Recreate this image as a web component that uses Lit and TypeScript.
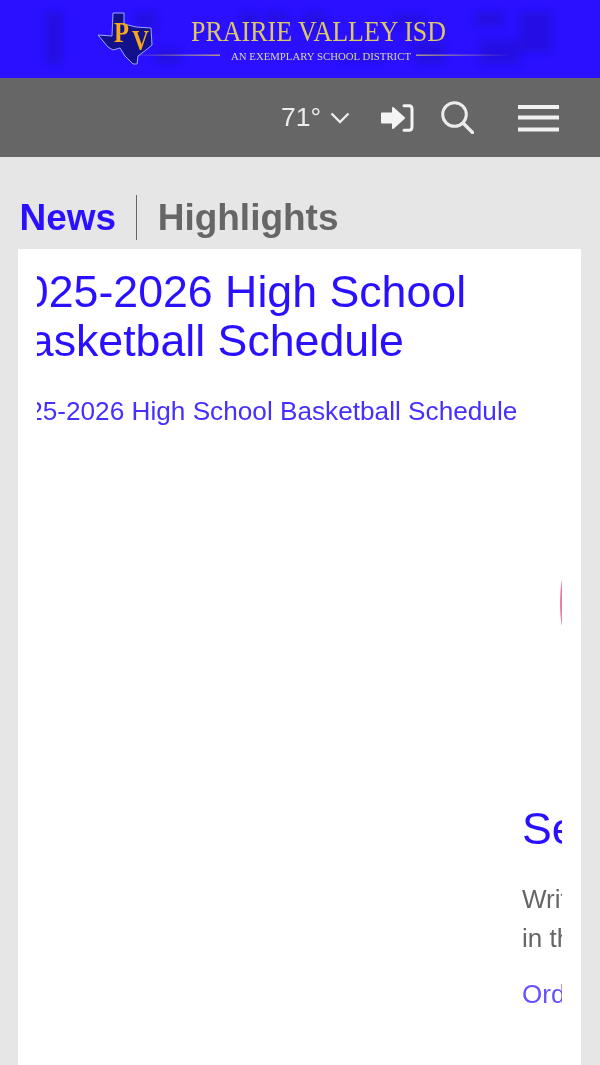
import { LitElement, html, css } from "lit";
import { customElement } from "lit/decorators.js";

@customElement("app-root")
export class AppRoot extends LitElement {
  static styles = css`
    :host { display: flex; flex-direction: column; height: 1065px; overflow: hidden; background: #e6e6e6; font-family: "Liberation Sans", Arial, sans-serif; filter: blur(0.6px); }
    .banner { display: block; height: 78px; flex: none; background: #2a10ff; }
    .banner svg { display: block; }
    .bar { flex: none; height: 79px; background: #666; display: flex; align-items: center; justify-content: flex-end; padding-right: 41px; color: #ececec; }
    .temp { font-size: 26.5px; font-weight: 400; line-height: 1; margin-right: 9px; }
    .chev { margin-right: 31px; }
    .signin { margin-right: 27px; }
    .search { margin-right: 44px; }
    .bar svg { display: block; }
    .tabs { flex: none; height: 92px; padding: 38px 0 0 19.5px; box-sizing: border-box; display: flex; align-items: flex-start; font-size: 37px; font-weight: 700; color: #666; }
    .tab { line-height: 45px; height: 45px; }
    .tab.on { color: #2a10ff; }
    .sep { width: 1px; height: 45px; background: #666; margin: 0 20.5px 0 20px; }
    .card { flex: 1; margin: 0 19px 0 18px; background: #fff; padding-left: 19px; padding-right: 19px; min-height: 0; }
    .view { height: 100%; overflow: hidden; }
    .track { display: flex; margin-left: -38px; width: max-content; }
    .s1 { width: 523px; flex: none; padding-top: 18px; box-sizing: border-box; }
    .s2 { width: 520px; flex: none; }
    h2 { margin: 0; font-weight: 400; font-size: 44.7px; line-height: 49px; color: #2a10ff; white-space: nowrap; }
    .sub { margin-top: 27px; font-size: 26.2px; line-height: 38px; color: #4630ff; white-space: nowrap; }
    .media { height: 555px; display: flex; align-items: flex-start; padding-left: 38px; padding-top: 323px; box-sizing: border-box; }
    .pink { width: 12px; height: 62px; border-radius: 50%; background: #ee7aa8; flex: none; }
    .s2 p { margin: 27px 0 0; font-size: 26px; line-height: 38.5px; color: #666; width: 300px; }
    .s2 a { display: block; margin-top: 18px; font-size: 26px; line-height: 38px; color: #6650ff; text-decoration: none; }
  `;

  render() {
    return html`
      <div class="banner">
        <svg width="600" height="78" viewBox="0 0 600 78">
          <defs>
            <linearGradient id="l1" x1="0" x2="1"><stop offset="0" stop-color="#d8c56a" stop-opacity="0"/><stop offset="1" stop-color="#d8c56a" stop-opacity=".8"/></linearGradient>
            <linearGradient id="l2" x1="0" x2="1"><stop offset="0" stop-color="#d8c56a" stop-opacity=".8"/><stop offset="1" stop-color="#d8c56a" stop-opacity="0"/></linearGradient>
            <filter id="b" x="-30%" y="-30%" width="160%" height="160%"><feGaussianBlur stdDeviation="3"/></filter>
          </defs>
          <g fill="#1f0fb8" opacity=".38" filter="url(#b)">
            <rect x="45" y="12" width="18" height="52"/><rect x="135" y="12" width="22" height="16"/><rect x="155" y="48" width="25" height="16"/>
            <rect x="240" y="12" width="18" height="16"/><rect x="265" y="12" width="22" height="10"/><rect x="305" y="12" width="20" height="20"/><rect x="395" y="14" width="30" height="14"/>
            <rect x="415" y="42" width="30" height="22"/><rect x="475" y="12" width="28" height="14"/><rect x="480" y="40" width="40" height="24"/><rect x="520" y="12" width="32" height="40"/>
            <rect x="340" y="52" width="40" height="10"/>
          </g>
          <rect x="125" y="54.5" width="95" height="1.4" fill="url(#l1)"/>
          <rect x="416" y="54.5" width="95" height="1.4" fill="url(#l2)"/>
          <path d="M113 13 L124 13 L124 24 L136 27 L151 28 L152 45 L146 50 L138 56 L137 64 L133 64 L125 56 L120 48 L113 50 L108 47 L98 35 L112 36 Z" fill="#12108a" stroke="#9aa6ff" stroke-width="1"/>
          <text x="114" y="42" font-family="Liberation Serif" font-weight="700" font-size="30" fill="#f5a81c" textLength="15" lengthAdjust="spacingAndGlyphs">P</text>
          <text x="132" y="50" font-family="Liberation Serif" font-weight="700" font-size="30" fill="#f5a81c" textLength="17" lengthAdjust="spacingAndGlyphs">V</text>
          <text x="191" y="41" font-family="Liberation Serif" font-size="29" fill="#dcc864" textLength="255" lengthAdjust="spacingAndGlyphs">PRAIRIE VALLEY ISD</text>
          <text x="231" y="60" font-family="Liberation Serif" font-size="10.5" fill="#dcd6a8" textLength="180" lengthAdjust="spacingAndGlyphs">AN EXEMPLARY SCHOOL DISTRICT</text>
        </svg>
      </div>
      <div class="bar">
        <span class="temp">71°</span>
        <svg class="chev" width="20" height="12" viewBox="0 0 20 12"><path d="M1.5 1.5 L10 10 L18.5 1.5" fill="none" stroke="#ececec" stroke-width="2.4"/></svg>
        <svg class="signin" width="33" height="28" viewBox="0 0 33 28">
          <path d="M1 9.5 H12 V4 L23 14 L12 24 V18.5 H1 Z" fill="#f4f4f4" stroke="#f4f4f4" stroke-width="2" stroke-linejoin="round"/>
          <path d="M23 1.8 H28 Q31 1.8 31 5 V23 Q31 26.2 28 26.2 H23" fill="none" stroke="#f4f4f4" stroke-width="3" stroke-linecap="round"/>
        </svg>
        <svg class="search" width="33" height="33" viewBox="0 0 33 33">
          <circle cx="13.5" cy="13.5" r="11.8" fill="none" stroke="#ececec" stroke-width="3"/>
          <path d="M22 22 L31.5 31.5" stroke="#ececec" stroke-width="3.4" stroke-linecap="round"/>
        </svg>
        <svg width="41" height="28" viewBox="0 0 41 28"><path d="M0 3 H41 M0 13.5 H41 M0 25.5 H41" stroke="#f2f2f2" stroke-width="4"/></svg>
      </div>
      <div class="tabs">
        <span class="tab on">News</span><span class="sep"></span><span class="tab">Highlights</span>
      </div>
      <div class="card">
        <div class="view">
          <div class="track">
            <div class="s1">
              <h2>2025-2026 High School<br>Basketball Schedule</h2>
              <div class="sub">2025-2026 High School Basketball Schedule</div>
            </div>
            <div class="s2">
              <div class="media"><span class="pink"></span></div>
              <h2>Senior Yearbook Ads</h2>
              <p>Write a special message<br>in the yearbook</p>
              <a href="#">Order here</a>
            </div>
          </div>
        </div>
      </div>
    `;
  }
}
